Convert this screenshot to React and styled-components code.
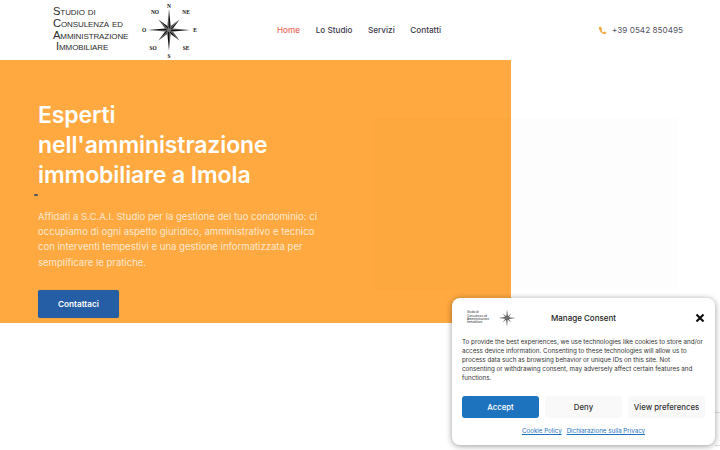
import React from "react";
import styled, { createGlobalStyle } from "styled-components";

const Global = createGlobalStyle`
  html, body { margin: 0; padding: 0; background: #fff; }
  body { width: 720px; height: 450px; overflow: hidden; font-family: "Inter", "Liberation Sans", sans-serif; }
`;
const Page = styled.div`position: relative; width: 720px; height: 450px; overflow: hidden; background: #fff;`;
const Header = styled.header`display: flex; align-items: center; height: 60px; padding: 0 37px 0 53px; box-sizing: border-box;`;
const Logo = styled.div`display: flex; align-items: center; width: 224px; gap: 10px;`;
const LogoText = styled.div`
  font-family: "Liberation Sans", Arial, sans-serif; font-variant: small-caps; font-size: 11.2px; line-height: 11.6px;
  color: #2c2c2c; width: 76px; white-space: nowrap; letter-spacing: -0.1px; margin-top: -1px;
`;
const LogoLine = styled.div`padding-left: ${p => p.$indent || 0}px;`;
const Nav = styled.nav`display: flex; gap: 15.5px; flex: 1; font-size: 8.2px; font-weight: 500;`;
const NavLink = styled.a`color: ${p => p.$active ? "#ec6a5c" : "#3d3a4e"};`;
const Phone = styled.div`display: flex; align-items: center; gap: 5px; font-size: 8.2px; color: #55535f;`;
const Hero = styled.section`display: flex; height: 263px;`;
const HeroPanel = styled.div`
  width: 511px; background: #ffa940; padding: 40px 0 0 38px; box-sizing: border-box;
`;
const Title = styled.h1`margin: 0; color: #fff; font-size: 23px; line-height: 30px; font-weight: 600; letter-spacing: -0.1px;`;
const Mark = styled.div`width: 4px; height: 2px; margin: 4px 0 0 -4px; background: #556; border-radius: 1px;`;
const Lead = styled.p`margin: 13px 0 0; width: 300px; color: #ffe8cf; font-size: 9.55px; line-height: 15.2px; white-space: nowrap;`;
const Cta = styled.a`
  display: flex; align-items: center; justify-content: center; width: 81px; height: 28px; margin-top: 20px;
  background: #265ea5; border-radius: 2px; color: #fff; font-size: 8.2px; font-weight: 600; box-shadow: 0 0 1px rgba(0,0,0,.25);
`;
const Watermark = styled.svg`position: absolute; left: 372px; top: 118px;`;
const Card = styled.div`
  position: absolute; left: 452px; top: 298px; width: 263px; height: 147px; box-sizing: border-box; padding: 8px 10px 0;
  background: #fff; border-radius: 8px; box-shadow: 0 1px 6px rgba(0,0,0,.4);
`;
const CardHead = styled.div`display: grid; grid-template-columns: 1fr auto 1fr; align-items: center; height: 22px;`;
const MiniLogo = styled.div`display: flex; align-items: center; gap: 6px; margin-left: 5px;`;
const MiniText = styled.div`font-family: "Liberation Sans", sans-serif; font-size: 3px; line-height: 3.4px; color: #333; white-space: nowrap;`;
const CardTitle = styled.div`font-size: 8px; font-weight: 500; color: #222;`;
const Close = styled.svg`display: block; justify-self: end; margin-right: 0;`;
const Body = styled.p`margin: 10px 0 0; font-size: 6.25px; line-height: 9.1px; color: #333; white-space: nowrap;`;
const Buttons = styled.div`display: grid; grid-template-columns: repeat(3, 77px); gap: 6px; margin-top: 13px;`;
const Btn = styled.button`
  height: 22px; padding: 0; border: 0; border-radius: 3px; font: 500 7.8px "Inter", sans-serif;
  background: ${p => p.$primary ? "#1e73be" : "#f9f9f9"}; color: ${p => p.$primary ? "#fff" : "#333"};
`;
const Links = styled.div`display: flex; justify-content: center; gap: 5px; margin-top: 9px; font-size: 6.2px;`;
const Legal = styled.a`color: #1e73be; text-decoration: underline;`;
const Badge = styled.div`position: absolute; left: 715px; top: 412px; width: 5px; height: 32px; border-top: 1px solid #ddd; border-bottom: 1px solid #ddd;`;

const LABELS = [["N",30,8],["S",30,58],["O",5,32],["E",56,32],["NO",16,14],["NE",47,14],["SO",14,50],["SE",47,50]];

function Star({ size, labels }) {
  const pts = [];
  for (let i = 0; i < 16; i++) {
    const a = (i * Math.PI) / 8 - Math.PI / 2;
    const r = i % 4 === 0 ? 21 : i % 2 === 0 ? 15 : 4.2;
    pts.push({ x: 30 + r * Math.cos(a), y: 30 + r * Math.sin(a) });
  }
  return (
    <svg width={size} height={size} viewBox="0 0 60 60">
      {pts.map((p, i) => {
        const n = pts[(i + 1) % 16];
        return <polygon key={i} points={`30,30 ${p.x},${p.y} ${n.x},${n.y}`} fill={i % 2 === 0 ? "#111" : "#555"} />;
      })}
      {labels && LABELS.map(([t, x, y]) => (
        <text key={t} x={x} y={y} textAnchor="middle" fontFamily="Liberation Serif, serif" fontWeight="700" fontSize="5.4" fill="#111">{t}</text>
      ))}
    </svg>
  );
}

export default function App() {
  return (
    <Page>
      <Global />
      <Header>
        <Logo>
          <LogoText>
            <LogoLine>Studio di</LogoLine>
            <LogoLine>Consulenza ed</LogoLine>
            <LogoLine>Amministrazione</LogoLine>
            <LogoLine $indent={3}>Immobiliare</LogoLine>
          </LogoText>
          <Star size={60} labels />
        </Logo>
        <Nav>
          <NavLink $active>Home</NavLink>
          <NavLink>Lo Studio</NavLink>
          <NavLink>Servizi</NavLink>
          <NavLink>Contatti</NavLink>
        </Nav>
        <Phone>
          <svg width="9" height="9" viewBox="0 0 24 24" fill="#f5a742"><path d="M6.6 1.5 2.5 3.2C1.8 12 10 22 20.8 21.6l1.8-4.4-5.4-2.7-2.2 2.4c-2.7-1-5-3.6-6-6.3l2.4-2z"/></svg>
          +39 0542 850495
        </Phone>
      </Header>
      <Hero>
        <HeroPanel>
          <Title>Esperti<br />nell'amministrazione<br />immobiliare a Imola</Title>
          <Mark />
          <Lead>
            Affidati a S.C.A.I. Studio per la gestione del tuo condominio: ci<br />
            occupiamo di ogni aspetto giuridico, amministrativo e tecnico<br />
            con interventi tempestivi e una gestione informatizzata per<br />
            semplificare le pratiche.
          </Lead>
          <Cta>Contattaci</Cta>
        </HeroPanel>
      </Hero>
      <Watermark width="310" height="172" viewBox="0 0 310 172">
        <path d="M0 0H305V172H0Z" fill="#000" opacity=".006" />
      </Watermark>
      <Badge />
      <Card>
        <CardHead>
          <MiniLogo>
            <MiniText>Studio di<br />Consulenza ed<br />Amministrazione<br />Immobiliare</MiniText>
            <Star size={24} />
          </MiniLogo>
          <CardTitle>Manage Consent</CardTitle>
          <Close width="10" height="10" viewBox="0 0 10 10"><path d="M1.5 1.5 8.5 8.5M8.5 1.5 1.5 8.5" stroke="#111" strokeWidth="2.2" /></Close>
        </CardHead>
        <Body>
          To provide the best experiences, we use technologies like cookies to store and/or<br />
          access device information. Consenting to these technologies will allow us to<br />
          process data such as browsing behavior or unique IDs on this site. Not<br />
          consenting or withdrawing consent, may adversely affect certain features and<br />
          functions.
        </Body>
        <Buttons>
          <Btn $primary>Accept</Btn>
          <Btn>Deny</Btn>
          <Btn>View preferences</Btn>
        </Buttons>
        <Links>
          <Legal>Cookie Policy</Legal>
          <Legal>Dichiarazione sulla Privacy</Legal>
        </Links>
      </Card>
    </Page>
  );
}
